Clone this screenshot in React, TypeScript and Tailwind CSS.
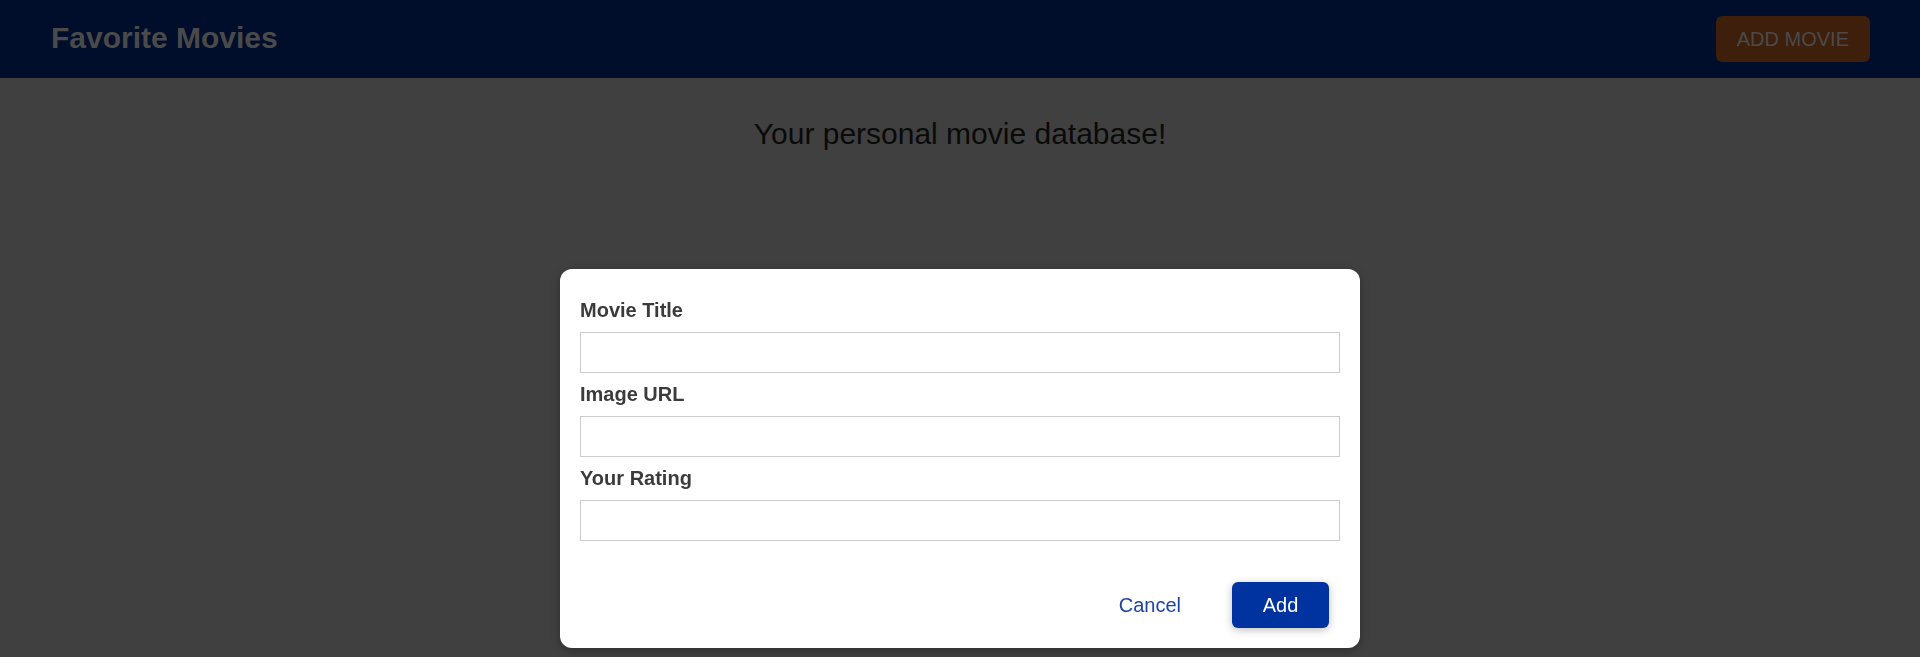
import { useState } from 'react';

const fields = [
    { id: 'title', label: 'Movie Title' },
    { id: 'image', label: 'Image URL' },
    { id: 'rating', label: 'Your Rating' },
];

const App = () => {
    const [values, setValues] = useState<Record<string, string>>({ title: '', image: '', rating: '' });

    return (
        <div className="min-h-screen w-full bg-[#404040] font-['Liberation_Sans',Arial,sans-serif]">

            {/* HEADER (dimmed by the open modal) */}
            <header className="h-[78px] w-full bg-[#000e2c] flex items-center justify-between pl-[51px] pr-[50px]">
                <h1 className="text-[30px] font-bold text-[#4a4a4a] leading-none -mt-[2px]">Favorite Movies</h1>
                <button className="h-[46px] px-[21px] rounded-md bg-[#3d1f0b] text-[20px] text-[#4a4a4a] uppercase">
                    Add Movie
                </button>
            </header>

            <p className="mt-[33px] text-center text-[30px] text-[#0a0a0a]">Your personal movie database!</p>

            {/* MODAL */}
            <div className="fixed top-[269px] left-1/2 -translate-x-1/2 w-[800px] bg-white rounded-xl shadow-[0_2px_10px_rgba(0,0,0,0.3)] px-5 pt-[30px] pb-5">
                <form className="flex flex-col" onSubmit={e => e.preventDefault()}>
                    {fields.map((f, i) => (
                        <div key={f.id} className={i < fields.length - 1 ? 'mb-[10px]' : ''}>
                            <label htmlFor={f.id} className="block text-[20px] leading-[23px] font-bold text-[#3b3b3b] mb-[10px]">
                                {f.label}
                            </label>
                            <input
                                id={f.id}
                                value={values[f.id]}
                                onChange={e => setValues({ ...values, [f.id]: e.target.value })}
                                className="block w-full h-[41px] border border-[#cccccc] px-2 text-[18px] outline-none"
                            />
                        </div>
                    ))}

                    <div className="mt-[41px] flex items-center justify-end gap-[21px] pr-[11px]">
                        <button type="button" className="h-[46px] px-[30px] text-[20px] text-[#1c44a8] rounded-md">
                            Cancel
                        </button>
                        <button type="submit" className="h-[46px] w-[97px] rounded-md bg-[#00339f] text-[20px] text-white shadow-[0_2px_8px_rgba(0,0,0,0.26)]">
                            Add
                        </button>
                    </div>
                </form>
            </div>
        </div>
    );
};

export default App;
